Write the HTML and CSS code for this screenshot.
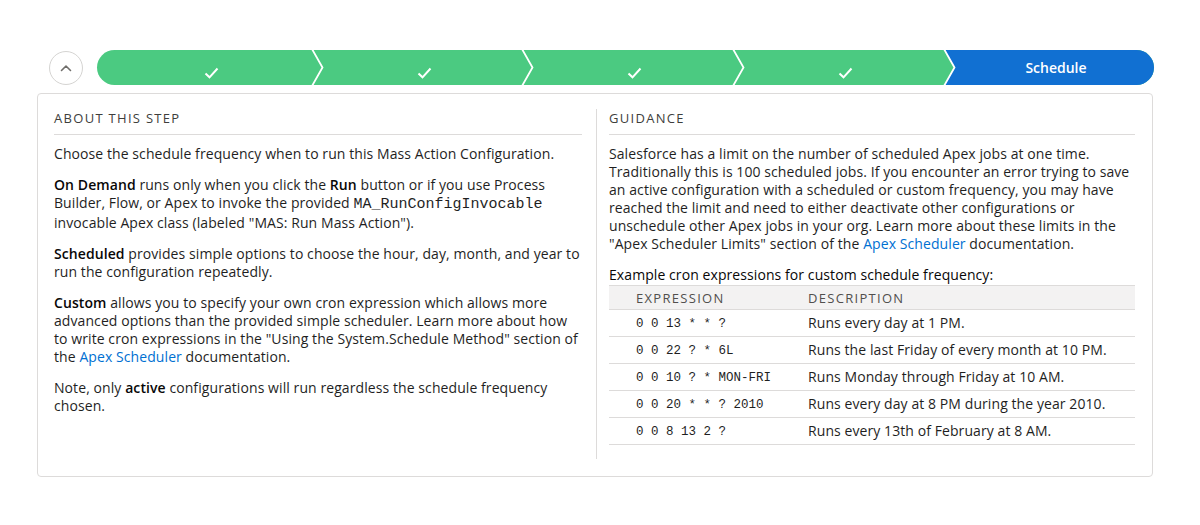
FILE: index.html
```html
<!DOCTYPE html>
<html lang="en">
<head>
<meta charset="utf-8">
<title>Schedule</title>
<link rel="stylesheet" href="styles.css">
</head>
<body>
<div class="page">
  <div class="path-row">
    <button class="toggle" type="button" aria-label="Collapse">
      <svg width="12" height="8" viewBox="0 0 12 8"><path d="M1.5 6.5 L6 2 L10.5 6.5" fill="none" stroke="#706e6b" stroke-width="1.6" stroke-linecap="round" stroke-linejoin="round"/></svg>
    </button>
    <div class="path">
      <div class="step done">
        <svg class="check" width="15" height="12" viewBox="0 0 15 12"><path d="M1.5 6.5 L5.5 10.3 L13.5 1.5" fill="none" stroke="#fff" stroke-width="2"/></svg>
        <svg class="sep" width="13" height="35" viewBox="0 0 13 35"><path d="M1 -1 L11.5 17.5 L1 36" fill="none" stroke="#fff" stroke-width="1.8"/></svg>
      </div>
      <div class="step done">
        <svg class="check" width="15" height="12" viewBox="0 0 15 12"><path d="M1.5 6.5 L5.5 10.3 L13.5 1.5" fill="none" stroke="#fff" stroke-width="2"/></svg>
        <svg class="sep" width="13" height="35" viewBox="0 0 13 35"><path d="M1 -1 L11.5 17.5 L1 36" fill="none" stroke="#fff" stroke-width="1.8"/></svg>
      </div>
      <div class="step done">
        <svg class="check" width="15" height="12" viewBox="0 0 15 12"><path d="M1.5 6.5 L5.5 10.3 L13.5 1.5" fill="none" stroke="#fff" stroke-width="2"/></svg>
        <svg class="sep" width="13" height="35" viewBox="0 0 13 35"><path d="M1 -1 L11.5 17.5 L1 36" fill="none" stroke="#fff" stroke-width="1.8"/></svg>
      </div>
      <div class="step done">
        <svg class="check" width="15" height="12" viewBox="0 0 15 12"><path d="M1.5 6.5 L5.5 10.3 L13.5 1.5" fill="none" stroke="#fff" stroke-width="2"/></svg>
        <svg class="sep" width="13" height="35" viewBox="0 0 13 35"><path d="M1 -1 L11.5 17.5 L1 36" fill="none" stroke="#fff" stroke-width="1.8"/></svg>
      </div>
      <div class="step current"><span class="step-label">Schedule</span></div>
    </div>
  </div>

  <div class="card">
    <div class="col col-left">
      <h2 class="col-title">About This Step</h2>
      <div class="col-body">
        <p>Choose the schedule frequency when to run this Mass Action Configuration.</p>
        <p><b>On Demand</b> runs only when you click the <b>Run</b> button or if you use Process Builder, Flow, or Apex to invoke the provided <code>MA_RunConfigInvocable</code> invocable Apex class (labeled "MAS: Run Mass Action").</p>
        <p><b>Scheduled</b> provides simple options to choose the hour, day, month, and year to run the configuration repeatedly.</p>
        <p><b>Custom</b> allows you to specify your own cron expression which allows more advanced options than the provided simple scheduler. Learn more about how to write cron expressions in the "Using the System.Schedule Method" section of the <a href="#">Apex Scheduler</a> documentation.</p>
        <p>Note, only <b>active</b> configurations will run regardless the schedule frequency chosen.</p>
      </div>
    </div>
    <div class="col col-right">
      <h2 class="col-title">Guidance</h2>
      <div class="col-body">
        <p>Salesforce has a limit on the number of scheduled Apex jobs at one time. Traditionally this is 100 scheduled jobs. If you encounter an error trying to save an active configuration with a scheduled or custom frequency, you may have reached the limit and need to either deactivate other configurations or unschedule other Apex jobs in your org. Learn more about these limits in the "Apex Scheduler Limits" section of the <a href="#">Apex Scheduler</a> documentation.</p>
        <p class="table-caption">Example cron expressions for custom schedule frequency:</p>
        <table class="cron">
          <thead>
            <tr><th>Expression</th><th>Description</th></tr>
          </thead>
          <tbody>
            <tr><td><code>0 0 13 * * ?</code></td><td>Runs every day at 1 PM.</td></tr>
            <tr><td><code>0 0 22 ? * 6L</code></td><td>Runs the last Friday of every month at 10 PM.</td></tr>
            <tr><td><code>0 0 10 ? * MON-FRI</code></td><td>Runs Monday through Friday at 10 AM.</td></tr>
            <tr><td><code>0 0 20 * * ? 2010</code></td><td>Runs every day at 8 PM during the year 2010.</td></tr>
            <tr><td><code>0 0 8 13 2 ?</code></td><td>Runs every 13th of February at 8 AM.</td></tr>
          </tbody>
        </table>
      </div>
    </div>
  </div>
</div>
</body>
</html>
```

FILE: styles.css
```css
* { box-sizing: border-box; }

html, body {
  margin: 0;
  padding: 0;
  background: #ffffff;
}

body {
  font-family: "Open Sans", "Liberation Sans", sans-serif;
  font-size: 14px;
  line-height: 18px;
  letter-spacing: 0.08px;
  color: #1f1f1f;
}

.page {
  padding: 50px 47px 0 37px;
}

/* ---------- path ---------- */
.path-row {
  display: flex;
  align-items: center;
  gap: 14px;
  padding-left: 12px;
  margin-right: -1px;
}

.toggle {
  flex: none;
  width: 34px;
  height: 34px;
  border: 1px solid #d5d4d2;
  border-radius: 50%;
  background: #fff;
  padding: 0;
  display: flex;
  align-items: center;
  justify-content: center;
}

.path {
  flex: 1;
  height: 35px;
  display: grid;
  grid-template-columns: 215fr 210fr 211fr 211fr 210fr;
  border-radius: 18px;
  overflow: hidden;
  background: #4bca81;
}

.step {
  position: relative;
  display: flex;
  justify-content: center;
  align-items: flex-end;
  padding-left: 14px;
  padding-bottom: 6px;
}

.step .check { display: block; }

.step .sep {
  position: absolute;
  top: 0;
  left: 100%;
  margin-left: -1px;
  z-index: 2;
}

.step.current {
  background: #1170d2;
  clip-path: polygon(0 0, 100% 0, 100% 100%, 0 100%, 11px 50%);
  align-items: center;
  padding-bottom: 0;
}

.step-label {
  color: #fff;
  font-weight: 600;
  font-size: 14px;
  letter-spacing: 0;
}

/* ---------- card ---------- */
.card {
  margin-top: 8px;
  border: 1px solid #dddbda;
  border-radius: 4px;
  padding: 15px 17px 17px 16px;
  display: grid;
  grid-template-columns: 543px 1fr;
}

.col-left {
  padding-right: 14px;
  border-right: 1px solid #dddbda;
}

.col-right {
  padding-left: 12px;
  padding-bottom: 14px;
}

.col-title {
  margin: 0;
  font-size: 13px;
  font-weight: 400;
  line-height: 18px;
  text-transform: uppercase;
  letter-spacing: 0.1em;
  color: #3e3e3c;
  padding-bottom: 7px;
  border-bottom: 1px solid #dddbda;
}

.col-body {
  padding-top: 10px;
}

.col-body p {
  margin: 0 0 13px;
}

b { font-weight: 600; color: #080707; }

a {
  color: #0070d2;
  text-decoration: none;
}

code {
  font-family: "Liberation Mono", "DejaVu Sans Mono", monospace;
  font-size: 15px;
  letter-spacing: 0;
}

.table-caption {
  color: #080707;
}

.col-body .table-caption {
  margin: 12px 0 1px;
}

.cron {
  width: 100%;
  border-collapse: collapse;
}

.cron th {
  text-align: left;
  font-weight: 400;
  font-size: 13px;
  text-transform: uppercase;
  letter-spacing: 0.1em;
  color: #514f4d;
  background: #f3f2f2;
  height: 24px;
  padding: 0;
  border-top: 1px solid #dddbda;
  border-bottom: 1px solid #dddbda;
}

.cron td {
  height: 27px;
  padding: 0;
  border-bottom: 1px solid #dddbda;
}

.cron th:first-child,
.cron td:first-child {
  width: 199px;
  padding-left: 27px;
}

.cron td code {
  font-size: 12.5px;
}
```
